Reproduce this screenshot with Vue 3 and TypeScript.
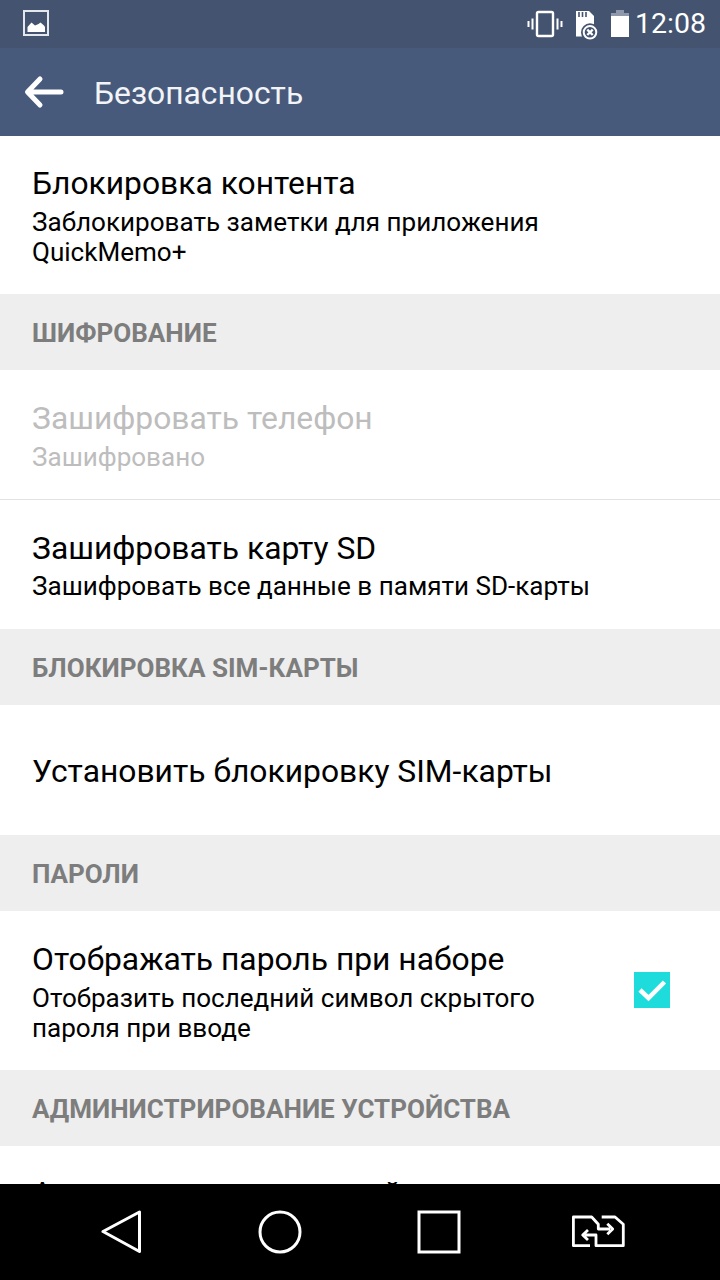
<script setup lang="ts">
interface Row { kind: 'row'; title: string; sub?: string; disabled?: boolean; check?: boolean; divider?: boolean; raised?: boolean; h: number }
interface Head { kind: 'head'; title: string }
const items: (Row | Head)[] = [
  { kind: 'row', title: 'Блокировка контента', sub: 'Заблокировать заметки для приложения QuickMemo+', h: 158 },
  { kind: 'head', title: 'ШИФРОВАНИЕ' },
  { kind: 'row', title: 'Зашифровать телефон', sub: 'Зашифровано', disabled: true, divider: true, h: 130 },
  { kind: 'row', title: 'Зашифровать карту SD', sub: 'Зашифровать все данные в памяти SD-карты', raised: true, h: 129 },
  { kind: 'head', title: 'БЛОКИРОВКА SIM-КАРТЫ' },
  { kind: 'row', title: 'Установить блокировку SIM-карты', h: 130 },
  { kind: 'head', title: 'ПАРОЛИ' },
  { kind: 'row', title: 'Отображать пароль при наборе', sub: 'Отобразить последний символ скрытого пароля при вводе', check: true, h: 159 },
  { kind: 'head', title: 'АДМИНИСТРИРОВАНИЕ УСТРОЙСТВА' },
  { kind: 'row', title: 'Администраторы устройства', sub: 'Просмотреть или отключить администраторов устройства', h: 158 },
]
</script>

<template>
  <div class="phone">
    <header class="status">
      <svg class="pic" width="28" height="28" viewBox="0 0 28 28">
        <rect x="1" y="1" width="24" height="24" fill="none" stroke="#e4e7ec" stroke-width="2" />
        <path d="M4.500 22V17L8.500 12.500L12 15.500L15.500 14L17.500 12.500L21 15.500L22 17V22Z" fill="#fff" />
      </svg>
      <div class="status-right">
        <svg width="36" height="30" viewBox="0 0 36 30" class="vib">
          <rect x="10" y="3" width="16" height="24" rx="1.500" fill="none" stroke="#fff" stroke-width="2.400" />
          <path d="M5.500 9.500V20.500M1.500 12V18M30.500 9.500V20.500M34.500 12V18" stroke="#fff" stroke-width="2" fill="none" />
        </svg>
        <svg width="28" height="32" viewBox="0 0 28 32" class="sd">
          <path d="M1 3H14L19 8V28.500H1Z" fill="#fff" />
          <path d="M4 4V9M7.500 4V9M11 4V9" stroke="#44536f" stroke-width="1.600" />
          <circle cx="15" cy="24.300" r="9" fill="#44536f" />
          <circle cx="15" cy="24.300" r="6.300" fill="none" stroke="#fff" stroke-width="2" />
          <path d="M12.300 21.600L17.700 27M17.700 21.600L12.300 27" stroke="#fff" stroke-width="2.300" />
        </svg>
        <svg width="20" height="30" viewBox="0 0 20 30" class="bat">
          <rect x="6" y="1" width="8" height="3" fill="#8e98aa" />
          <rect x="1" y="4" width="18" height="3" fill="#8e98aa" />
          <rect x="1" y="7" width="18" height="21" fill="#fff" />
        </svg>
        <span class="time">12:08</span>
      </div>
    </header>

    <div class="appbar">
      <svg width="40" height="34" viewBox="0 0 40 34" class="back">
        <path d="M37 17H4M16 4L3.500 17L16 30" fill="none" stroke="#fff" stroke-width="5" stroke-linecap="round" stroke-linejoin="round" />
      </svg>
      <span class="appbar-title">Безопасность</span>
    </div>

    <main class="list">
      <template v-for="item in items" :key="item.title">
        <div v-if="item.kind === 'head'" class="head">{{ item.title }}</div>
        <div
          v-else
          class="row"
          :class="{ disabled: item.disabled, divider: item.divider, raised: item.raised }"
          :style="{ height: item.h + 'px' }"
        >
          <div class="texts">
            <div class="title">{{ item.title }}</div>
            <div v-if="item.sub" class="sub">{{ item.sub }}</div>
          </div>
          <div v-if="item.check" class="check">
            <svg width="36" height="36" viewBox="0 0 36 36">
              <path d="M6 18L14.500 26L30.500 10" fill="none" stroke="#fff" stroke-width="4.500" />
            </svg>
          </div>
        </div>
      </template>
    </main>

    <nav class="nav">
      <svg width="40" height="44" viewBox="0 0 40 44" class="nb">
        <path d="M38.500 2V41.500L2 21.500Z" fill="none" stroke="#fff" stroke-width="3" stroke-linejoin="round" />
      </svg>
      <svg width="44" height="44" viewBox="0 0 44 44" class="nb">
        <circle cx="22" cy="22" r="20" fill="none" stroke="#fff" stroke-width="3" />
      </svg>
      <svg width="44" height="44" viewBox="0 0 44 44" class="nb">
        <rect x="2" y="2" width="40" height="40" fill="none" stroke="#fff" stroke-width="3" />
      </svg>
      <svg width="54" height="36" viewBox="0 0 54 36" class="nb">
        <path d="M18 31.700H1.400V3H19.700L26.300 10.300V15H38M35.300 9.700L40.700 15L35.300 20.300" fill="none" stroke="#fff" stroke-width="2.800" stroke-linejoin="round" />
        <path d="M29.700 3H43L51.300 10.300V31.700H24V21H13M16 16L10.700 21L16 26" fill="none" stroke="#fff" stroke-width="2.800" stroke-linejoin="round" />
      </svg>
    </nav>
  </div>
</template>

<style>
html, body { margin: 0; padding: 0; background: #000; }
</style>

<style scoped>
.phone {
  width: 720px;
  height: 1280px;
  display: flex;
  flex-direction: column;
  overflow: hidden;
  font-family: Roboto, "Noto Sans", sans-serif;
  background: #fff;
}
.status {
  height: 48px;
  flex: none;
  background: #44536f;
  display: flex;
  align-items: center;
  justify-content: space-between;
  padding: 0 14px 0 23px;
}
.pic { display: block; }
.status-right { display: flex; align-items: center; }
.vib { margin-right: 12px; }
.sd { margin-right: 7px; }
.bat { margin-right: 5px; }
.time { color: #fff; font-size: 28.500px; line-height: 48px; }
.appbar {
  height: 88px;
  flex: none;
  box-sizing: border-box;
  background: #485a7b;
  display: flex;
  align-items: center;
  padding-left: 24px;
}
.back { margin-right: 30px; }
.appbar-title { color: #f2f4f7; font-size: 31.800px; position: relative; top: 1px; }
.list { flex: 1; min-height: 0; overflow: hidden; }
.head {
  height: 76px;
  box-sizing: border-box;
  background: #eeeeee;
  color: #7d7d7d;
  font-size: 26.050px;
  font-weight: 700;
  line-height: 78px;
  padding-left: 32px;
}
.row {
  box-sizing: border-box;
  display: flex;
  align-items: center;
  padding: 0 50px 0 32px;
  background: #fff;
  color: #000;
}
.row.raised { padding-bottom: 1px; }
.row.raised .sub { margin-top: 3px; }
.row.divider { border-bottom: 1px solid #e2e2e2; }
.texts { flex: 1; min-width: 0; }
.title { font-size: 31.800px; line-height: 40px; }
.title:only-child { margin-top: 2px; }
.sub { font-size: 26.050px; line-height: 30px; margin-top: 4px; }
.disabled { color: #bdbdbd; }
.check {
  width: 36px;
  height: 36px;
  background: #1fdcdc;
  flex: none;
  margin: 0 0 1px 60px;
}
.check svg { display: block; }
.nav {
  height: 96px;
  flex: none;
  background: #000;
  display: flex;
  align-items: center;
}
.nb { display: block; flex: none; }
.nb:nth-child(1) { margin-left: 101px; }
.nb:nth-child(2) { margin-left: 117px; }
.nb:nth-child(3) { margin-left: 115px; }
.nb:nth-child(4) { margin-left: 111px; }
</style>
